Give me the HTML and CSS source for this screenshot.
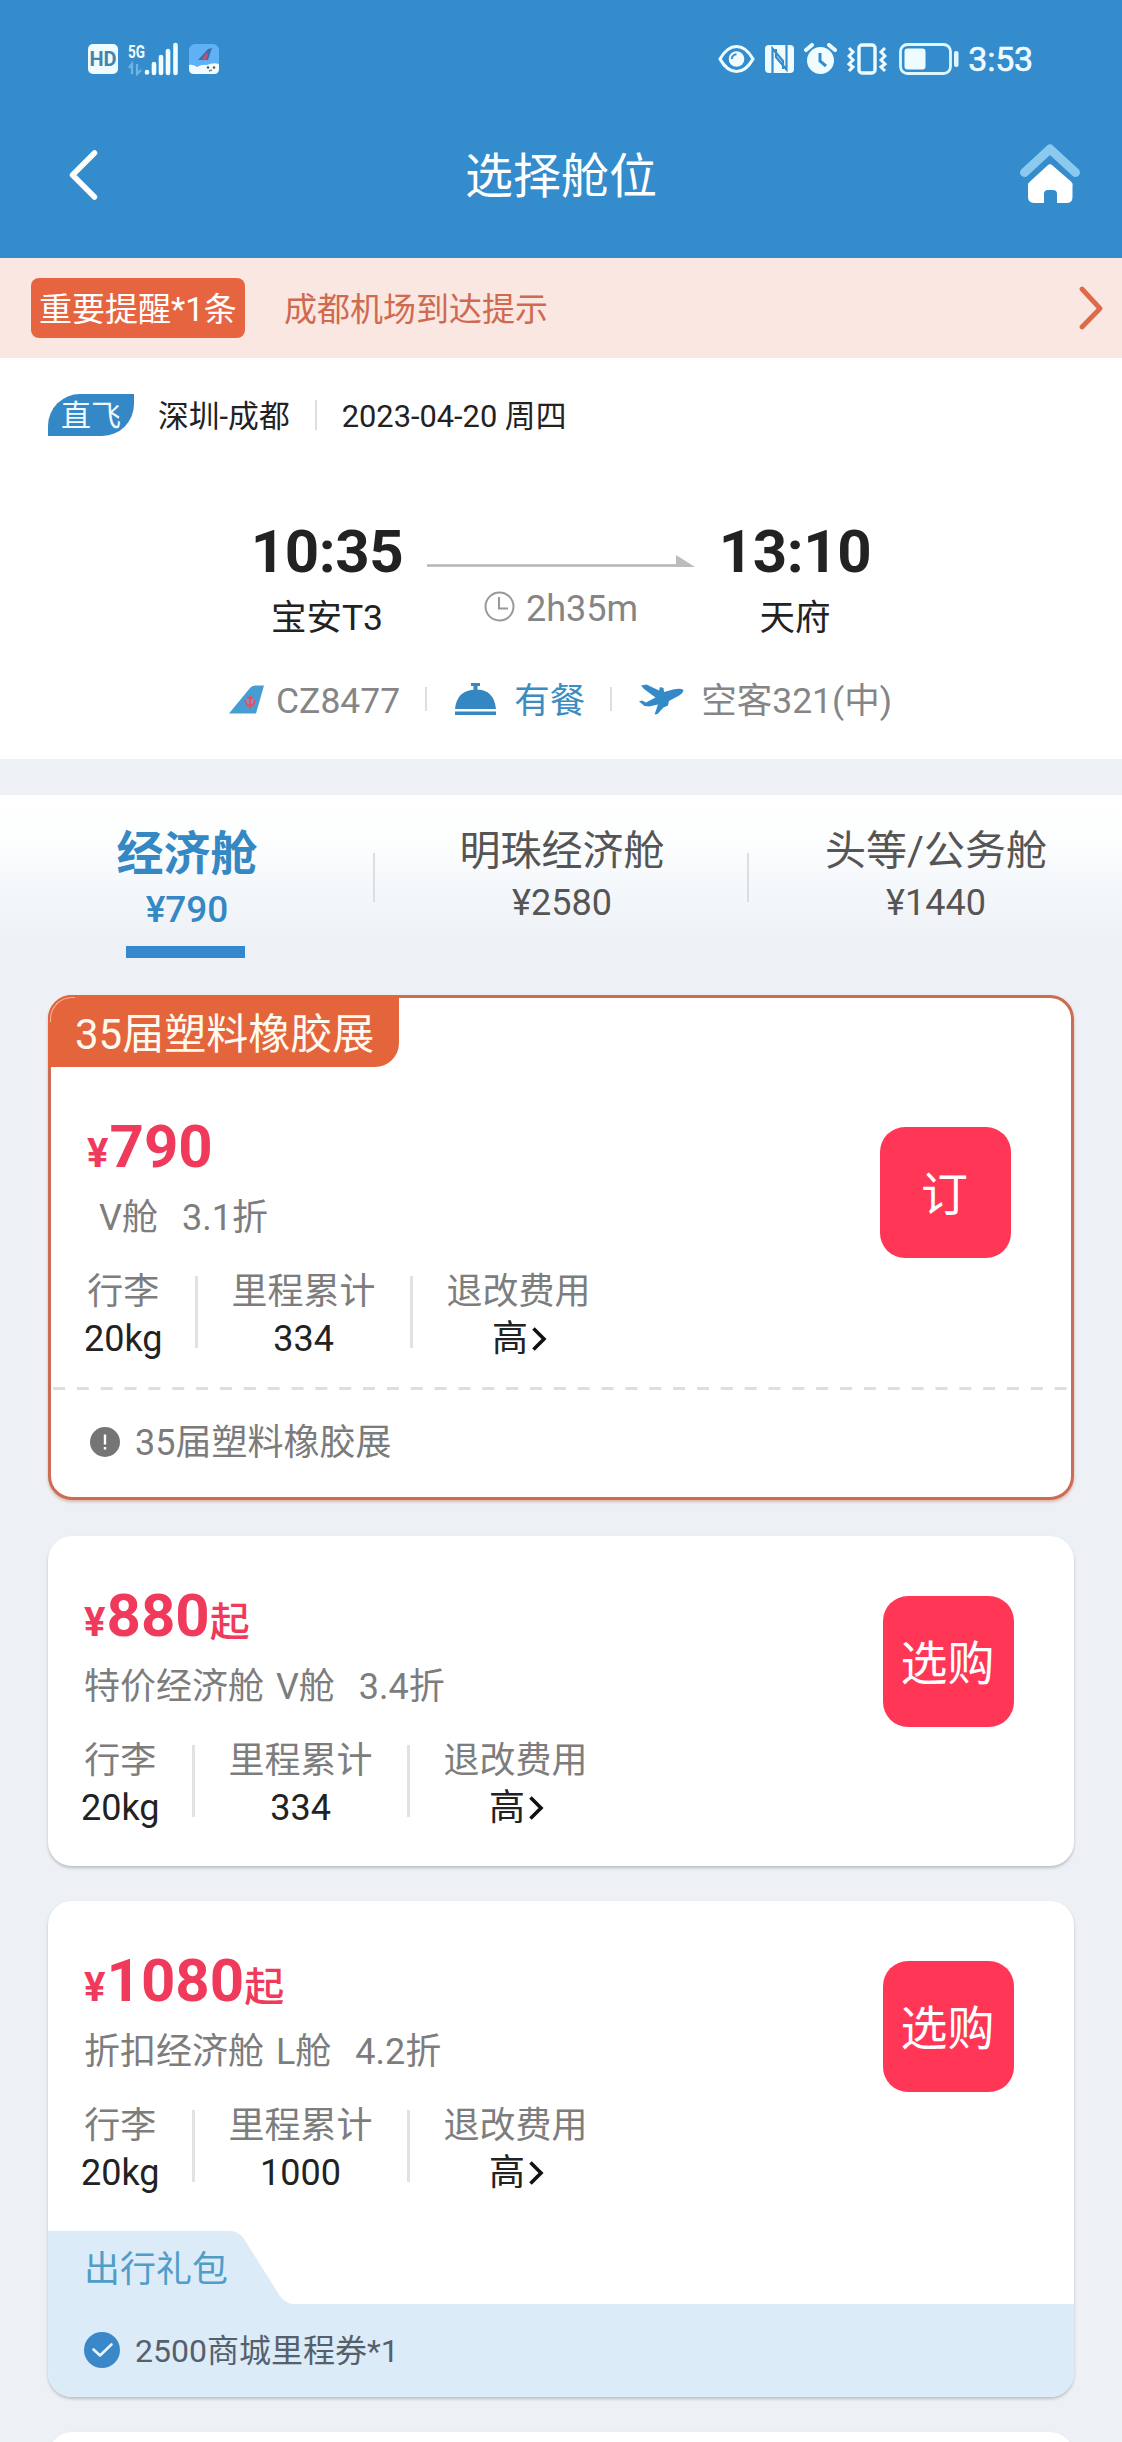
FILE: index.html
```html
<!DOCTYPE html>
<html lang="zh-CN">
<head>
<meta charset="utf-8">
<title>选择舱位</title>
<link rel="stylesheet" href="styles.css">
</head>
<body>
<header class="header">
  <div class="status">
    <div class="status-left">
      <span class="hd">HD</span>
      <svg class="signal" width="50" height="34" viewBox="0 0 50 34">
        <text class="signal-text" x="0" y="16" textLength="17" lengthAdjust="spacingAndGlyphs">5G</text>
        <path d="M4 32V22l-3 4M9 22v10l4-4" stroke="#6fb4e2" stroke-width="2.200" fill="none"/>
        <path d="M19 30v.5M26 22v9M33 15v16M40 9v22M47.500 3v28" stroke="#eefbff" stroke-width="4.600" stroke-linecap="round"/>
      </svg>
      <svg class="app" width="30" height="30" viewBox="0 0 30 30">
        <rect width="30" height="30" rx="6" fill="#5fb0f5"/>
        <path d="M0 21q4-1 8 2 5-3 10-2 6-3 12-1v5q0 5-5 5H5q-5 0-5-5z" fill="#f2fcff"/>
        <path d="M9 16L19 5l4-1-4 12z" fill="#3c6dab"/>
        <path d="M13 15l5-7 1 3-2 5z" fill="#c4526f"/>
        <circle cx="19" cy="23.500" r="1.200" fill="#456"/><circle cx="25" cy="23.500" r="1.200" fill="#456"/><path d="M20 27l3-1" stroke="#789" stroke-width="1.500"/>
      </svg>
    </div>
    <div class="status-right">
      <svg width="37" height="30" viewBox="0 0 37 30">
        <path d="M2 15Q9 2.500 18.500 2.500T35 15Q28 27.500 18.500 27.500T2 15z" fill="none" stroke="#effcff" stroke-width="3.200" stroke-linejoin="round"/>
        <circle cx="18.500" cy="15" r="7.800" fill="#effcff"/>
        <path d="M13.800 15a5 5 0 0 1 4.700-4.700" fill="none" stroke="#348ccc" stroke-width="2"/>
      </svg>
      <svg class="nfc" width="29" height="30" viewBox="0 0 29 30">
        <rect y="1" width="29" height="28" rx="4" fill="#effcff"/>
        <path d="M7.500 29V4.500L18 17v8M21.500 1v24.500L11 13V5" fill="none" stroke="#348ccc" stroke-width="2.200"/>
      </svg>
      <svg class="alarm" width="33" height="32" viewBox="0 0 33 32">
        <circle cx="16.500" cy="17.500" r="13.500" fill="#effcff"/>
        <path d="M2 7l6-5M31 7l-6-5" stroke="#effcff" stroke-width="4" stroke-linecap="round"/>
        <path d="M16 10v8l6 5" fill="none" stroke="#348ccc" stroke-width="3"/>
      </svg>
      <svg class="vibrate" width="40" height="32" viewBox="0 0 40 32">
        <rect x="12" y="2" width="16" height="28" rx="3" fill="none" stroke="#effcff" stroke-width="3.400"/>
        <path d="M2 5l4 4-4 4 4 4-4 4 4 3-4 4M38 5l-4 4 4 4-4 4 4 4-4 3 4 4" fill="none" stroke="#effcff" stroke-width="3"/>
      </svg>
      <svg class="battery" width="60" height="32" viewBox="0 0 60 32">
        <rect x="1.500" y="1.500" width="50" height="29" rx="7" fill="none" stroke="#dff6ff" stroke-width="2.800"/>
        <rect x="5.500" y="5.500" width="21" height="21" rx="3" fill="#effcff"/>
        <rect x="55" y="8" width="4.500" height="16" rx="2" fill="#dff6ff"/>
      </svg>
      <span class="clock">3:53</span>
    </div>
  </div>
  <div class="titlebar">
    <svg width="60" height="60" viewBox="0 0 60 60"><path d="M34.500 9L12.500 31l22 22" fill="none" stroke="#fff" stroke-width="5.500" stroke-linecap="round" stroke-linejoin="round"/></svg>
    <h1>选择舱位</h1>
    <svg width="60" height="60" viewBox="0 0 60 60">
      <path d="M4.500 28.500L30 5l25.500 23.500" fill="none" stroke="#8cc9ee" stroke-width="9" stroke-linecap="round" stroke-linejoin="round"/>
      <path d="M27.500 21.500q2.500-2.500 5 0L51 37.500q2 2 1.500 4V53q0 6-6 6H37V50q0-4-4-4h-5q-4 0-4 4v9h-9q-7 0-7-6V41.500q-.500-2 2-4z" fill="#fff"/>
    </svg>
  </div>
</header>

<div class="notice">
  <span class="notice-badge">重要提醒*1条</span>
  <span class="notice-text">成都机场到达提示</span>
  <svg width="26" height="46" viewBox="0 0 26 46"><path d="M3 4l18 19.500L3 42" fill="none" stroke="#de6a4a" stroke-width="4.800" stroke-linecap="round" stroke-linejoin="round"/></svg>
</div>

<section class="flight">
  <div class="route">
    <span class="direct">直飞</span>
    <span class="cities">深圳-成都</span>
    <i class="bar"></i>
    <span class="date">2023-04-20 周四</span>
  </div>
  <div class="times">
    <div class="stop"><b>10:35</b><span>宝安T3</span></div>
    <div class="duration">
      <svg width="268" height="14" viewBox="0 0 268 14"><path d="M0 11.500h262" stroke="#b5b5b5" stroke-width="2.600"/><path d="M249 1v12h19z" fill="#bcbcbc"/></svg>
      <div class="span">
        <svg width="31" height="31" viewBox="0 0 31 31"><circle cx="15.500" cy="15.500" r="14" fill="none" stroke="#999" stroke-width="2"/><path d="M15 6v11.500h9" fill="none" stroke="#999" stroke-width="2"/></svg>
        <span>2h35m</span>
      </div>
    </div>
    <div class="stop"><b>13:10</b><span>天府</span></div>
  </div>
  <div class="meta">
    <svg class="tail" width="35" height="29" viewBox="0 0 35 29"><path d="M0 28.500L21 3q2-2.500 5-2.500h9l-8 28z" fill="#459dd2"/><circle cx="21" cy="17" r="5.200" fill="#8c8fc4"/><path d="M21 10.500v13M16.500 14.500q0 6 4.500 6.500 4.500-.500 4.500-6.500M18 13h6" stroke="#e0506c" stroke-width="1.900" fill="none"/></svg>
    <span class="meta-text">CZ8477</span>
    <i class="bar bar-first"></i>
    <svg class="bell" width="41" height="33" viewBox="0 0 41 33"><path d="M16 0h9v3h-2.500v4h-4V3H16zM0 26Q2 7 20.500 6.500T41 26zM0 28.500h41V32H0z" fill="#3587c3"/></svg>
    <span class="meta-text meal">有餐</span>
    <i class="bar bar-second"></i>
    <svg class="plane" width="45" height="31" viewBox="0 0 45 31"><path d="M2 1.500l5.500-1L20 6.500l1-3.500 3.500 1 .5 4 9-2.500q8-1.500 10.500.500-.500 4-8 7.500L30 17l-1 4.500-4.500 2L18.500 30l-3 .5 3.500-10-9 2-4.500-.5L0 17.500l3-1 4 2 9.500-5L5 5z" fill="#348ac8"/></svg>
    <span class="meta-text">空客321(中)</span>
  </div>
</section>

<nav class="tabs">
  <div class="tab active"><span class="name">经济舱</span><span class="fare">¥790</span></div>
  <div class="tab"><span class="name">明珠经济舱</span><span class="fare">¥2580</span></div>
  <div class="tab"><span class="name">头等/公务舱</span><span class="fare">¥1440</span></div>
</nav>

<main class="cards">
  <article class="card featured">
    <div class="label">35届塑料橡胶展</div>
    <div class="offer">
      <div class="info">
        <div class="price"><small>¥</small>790</div>
        <div class="desc indent"><span>V舱</span><span>3.1折</span></div>
        <div class="stats">
          <div class="stat"><span>行李</span><b>20kg</b></div>
          <div class="stat"><span>里程累计</span><b>334</b></div>
          <div class="stat"><span>退改费用</span><b>高<svg width="20" height="26" viewBox="0 0 20 26"><path d="M5.500 2.500L16 13 5.500 23.500" fill="none" stroke="#111" stroke-width="3.600"/></svg></b></div>
        </div>
      </div>
      <button class="buy">订</button>
    </div>
    <svg class="dashes" width="1014" height="3" viewBox="0 0 1014 3"><path d="M0 1.500h1014" stroke="#dedede" stroke-width="3" stroke-dasharray="12 11.850"/></svg>
    <div class="note">
      <svg width="30" height="30" viewBox="0 0 30 30"><circle cx="15" cy="15" r="15" fill="#757575"/><path d="M15 7.500v10M15 20v2.500" stroke="#fff" stroke-width="2.400"/></svg>
      <span>35届塑料橡胶展</span>
    </div>
  </article>

  <article class="card">
    <div class="offer">
      <div class="info">
        <div class="price"><small>¥</small>880<em>起</em></div>
        <div class="desc"><span>特价经济舱 V舱</span><span>3.4折</span></div>
        <div class="stats">
          <div class="stat"><span>行李</span><b>20kg</b></div>
          <div class="stat"><span>里程累计</span><b>334</b></div>
          <div class="stat"><span>退改费用</span><b>高<svg width="20" height="26" viewBox="0 0 20 26"><path d="M5.500 2.500L16 13 5.500 23.500" fill="none" stroke="#111" stroke-width="3.600"/></svg></b></div>
        </div>
      </div>
      <button class="buy">选购</button>
    </div>
  </article>

  <article class="card">
    <div class="offer">
      <div class="info">
        <div class="price"><small>¥</small>1080<em>起</em></div>
        <div class="desc"><span>折扣经济舱 L舱</span><span>4.2折</span></div>
        <div class="stats">
          <div class="stat"><span>行李</span><b>20kg</b></div>
          <div class="stat"><span>里程累计</span><b>1000</b></div>
          <div class="stat"><span>退改费用</span><b>高<svg width="20" height="26" viewBox="0 0 20 26"><path d="M5.500 2.500L16 13 5.500 23.500" fill="none" stroke="#111" stroke-width="3.600"/></svg></b></div>
        </div>
      </div>
      <button class="buy">选购</button>
    </div>
    <div class="gift">
      <div class="gift-tab">
        <span>出行礼包</span>
        <svg width="74" height="73" viewBox="0 0 74 73"><path d="M0 0Q9 0 14 8L50 65Q55 72 63 73H0z" fill="#dbebf8"/></svg>
      </div>
      <div class="gift-body">
        <svg width="36" height="36" viewBox="0 0 36 36"><circle cx="18" cy="18" r="18" fill="#3a88c8"/><path d="M9.500 17.500l6.500 6 11.500-11" fill="none" stroke="#e6f5ff" stroke-width="2.600" stroke-linecap="round" stroke-linejoin="round"/></svg>
        <span>2500商城里程券*1</span>
      </div>
    </div>
  </article>

  <article class="card next"></article>
</main>
</body>
</html>
```
FILE: styles.css
```css
* { box-sizing: border-box; }
body {
  margin: 0;
  width: 1122px;
  height: 2442px;
  overflow: hidden;
  background: #edf0f4;
  color: #222;
  font-family: Roboto, "Noto Sans CJK SC", sans-serif;
  font-size: 36px;
  line-height: 40px;
}
svg { display: block; flex: none; }
span, b { white-space: nowrap; }

.header { height: 258px; background: #348ccc; color: #fff; }
.status { display: flex; justify-content: space-between; height: 116px; padding: 1px 89px 0 88px; align-items: center; }
.status-left, .status-right { display: flex; align-items: center; }
.hd {
  width: 30px; height: 30px; border-radius: 5px;
  background: #effcff; color: #4583ab;
  font-size: 20px; font-weight: 700; line-height: 30px; text-align: center;
}
.signal { margin-left: 10px; }
.signal-text { font: 700 18px Roboto, sans-serif; fill: #effcff; }
.app { margin-left: 11px; }
.nfc { margin-left: 10px; }
.alarm { margin-left: 10px; }
.vibrate { margin-left: 10px; }
.battery { margin-left: 12px; }
.clock { margin-left: 9px; font-size: 34px; letter-spacing: -.2px; color: #effcff; -webkit-text-stroke: .6px #effcff; }

.titlebar { display: flex; justify-content: space-between; align-items: center; height: 116px; padding: 0 42px 0 60px; }
h1 { margin: 0 0 0 -18px; padding-top: 6px; font-size: 48px; font-weight: 400; line-height: 60px; }

.notice { display: flex; align-items: center; height: 100px; padding: 0 17px 0 31px; background: #fae7e1; font-size: 33px; }
.notice-badge {
  width: 214px; height: 60px; border-radius: 8px;
  background: #e66540; color: #fff; text-align: center; line-height: 64px;
}
.notice-text { flex: 1; padding: 4px 0 0 39px; color: #cf6a50; }

.flight { height: 401px; background: #fff; padding: 36px 48px 0; }
.route { display: flex; align-items: center; height: 42px; font-size: 30.800px; }
.direct {
  width: 86px; height: 42px; border-radius: 32px 0 32px 0;
  background: #3488c6; color: #eefaff; font-size: 30px; line-height: 44px; text-align: center;
}
.cities { margin-left: 24px; padding-top: 3px; }
.date { padding-top: 3px; }
.bar { width: 2px; height: 30px; background: #dedede; }
.route .bar { margin: 0 25px; }
.times { display: flex; justify-content: center; margin-top: 85px; }
.stop { width: 170px; display: flex; flex-direction: column; align-items: center; font-size: 35.500px; }
.stop b { font-size: 60px; line-height: 62px; letter-spacing: -.4px; }
.stop span { margin-top: 15px; }
.duration { width: 298px; display: flex; flex-direction: column; align-items: center; padding-top: 33px; }
.span { display: flex; align-items: center; gap: 11px; height: 40px; margin-top: 19px; color: #858585; }
.span span { padding-top: 3px; }
.span svg { margin-top: -2px; }
.meta { display: flex; align-items: center; height: 40px; margin: 41px 0 0 181px; color: #858585; font-size: 35.500px; }
.meta .bar { height: 24px; }
.meta-text { padding-top: 4px; }
.tail { margin-right: 12px; }
.bar-first { margin: 0 28px 0 25px; }
.bell { margin-right: 18px; }
.meal { color: #3b8cc0; }
.bar-second { margin: 0 27px 0 25px; }
.plane { margin-right: 17px; }

.tabs {
  display: grid; grid-template-columns: repeat(3, 374px);
  height: 164px; margin-top: 36px; padding-top: 30px;
  background: linear-gradient(#fff 0, #fdfefe 40px, #f6f9fc 85px, #edf0f4 150px);
}
.tab { position: relative; display: flex; flex-direction: column; align-items: center; color: #555; padding-left: 2px; }
.tab + .tab::before { content: ""; position: absolute; left: -1px; top: 28px; width: 2px; height: 49px; background: #dcdfe2; }
.name { font-size: 41px; line-height: 50px; padding-top: 1px; }
.fare { margin-top: 7px; }
.active { color: #3488c4; padding-left: 0; }
.active .name { font-size: 47px; line-height: 54px; font-weight: 700; margin-top: 1px; }
.active .fare { font-weight: 500; margin-top: 9px; font-size: 37px; }
.active::after { content: ""; width: 119px; height: 12px; margin: 16px 3px 0 0; background: #3488ce; }

.cards { display: flex; flex-direction: column; gap: 35px; padding: 36px 48px 0 48px; }
.card { border-radius: 24px; background: #fff; box-shadow: 0 2px 3px rgba(70, 80, 90, .3); }
.featured { height: 505px; border: 3px solid #ca6d54; box-shadow: 0 2px 3px rgba(190, 80, 50, .35); margin-bottom: 1px; }
.label {
  position: relative; width: 351px; height: 72px; margin: -3px 0 0 -3px; padding-left: 27px;
  border-radius: 24px 0 24px 0; background: #e4643c; color: #fffaf0;
  font-size: 42px; line-height: 80px;
}
.label::before {
  content: ""; position: absolute; left: 2px; top: 2px; width: 24px; height: 24px;
  border-top: 1px solid #f5b59c; border-left: 1px solid #f5b59c; border-radius: 22px 0 0 0;
}
.offer { display: flex; justify-content: space-between; align-items: flex-start; height: 330px; padding: 48px 60px 0 35px; }
.featured .offer { height: 320px; }
.price { font-size: 60px; font-weight: 700; line-height: 64px; color: #f03a5b; white-space: nowrap; }
.price small { font-size: 40px; line-height: 0; margin: 0 1px; }
.price em { font-size: 40px; font-style: normal; font-weight: 500; line-height: 0; }
.desc { display: flex; gap: 24px; margin-top: 19px; padding-left: 1px; color: #7d7d7d; word-spacing: 3px; }
.indent { padding-left: 13px; }
.stats { display: flex; margin: 34px 0 0 -2px; }
.stat { display: flex; flex-direction: column; align-items: center; gap: 7px; color: #7d7d7d; }
.stat b { display: flex; align-items: center; font-weight: 400; color: #222; }
.stat + .stat { position: relative; margin-left: 69px; }
.stat + .stat::before { content: ""; position: absolute; left: -37px; top: 4px; width: 3px; height: 72px; background: #e2e2e2; }
.stat:last-child { margin-left: 71px; }
.stat:last-child b { padding-left: 3px; }
.buy {
  width: 131px; height: 131px; margin: 12px 0 0; padding: 4px 2px 0 0; border: 0; border-radius: 25px;
  background: #ff3656; color: #fff; font: 400 47px/127px Roboto, "Noto Sans CJK SC", sans-serif;
}
.dashes { margin-left: 2px; }
.note { display: flex; align-items: center; gap: 15px; padding: 31px 0 0 39px; color: #7b7b7b; }
.note span { padding-top: 2px; }
.note svg { margin-top: -1px; }

.gift-tab { display: flex; height: 73px; color: #519dc8; }
.gift-tab span { width: 182px; padding-left: 36px; background: #dbebf8; line-height: 78px; }
.gift-body {
  display: flex; align-items: center; gap: 15px; height: 93px; padding: 0 0 1px 36px;
  border-radius: 0 0 24px 24px; background: #dbebf8; color: #56606c; font-size: 32px;
}
.gift-body span { padding-top: 2px; }
.next { height: 60px; }
```
